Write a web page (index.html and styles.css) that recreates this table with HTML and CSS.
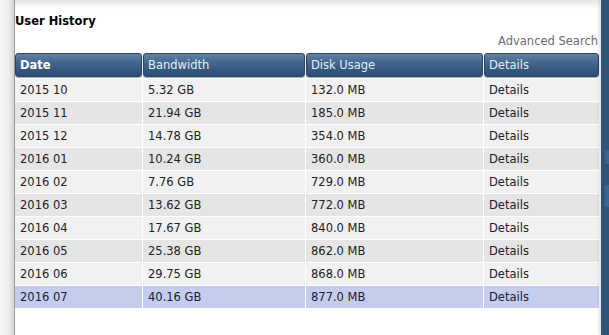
FILE: index.html
```html
<!DOCTYPE html>
<html>
<head>
<meta charset="utf-8">
<link rel="stylesheet" href="styles.css">
</head>
<body>
<div class="page">
  <div class="gutter"></div>
  <div class="panel">
    <div class="topshade"></div>
    <h2 class="title">User History</h2>
    <div class="search-row"><a class="adv" href="#">Advanced Search</a></div>
    <table class="history">
      <colgroup>
        <col class="c1"><col class="c2"><col class="c3"><col class="c4">
      </colgroup>
      <thead>
        <tr><th class="sorted">Date</th><th>Bandwidth</th><th>Disk Usage</th><th>Details</th></tr>
      </thead>
      <tbody>
        <tr class="odd"><td>2015 10</td><td>5.32 GB</td><td>132.0 MB</td><td>Details</td></tr>
        <tr class="even"><td>2015 11</td><td>21.94 GB</td><td>185.0 MB</td><td>Details</td></tr>
        <tr class="odd"><td>2015 12</td><td>14.78 GB</td><td>354.0 MB</td><td>Details</td></tr>
        <tr class="even"><td>2016 01</td><td>10.24 GB</td><td>360.0 MB</td><td>Details</td></tr>
        <tr class="odd"><td>2016 02</td><td>7.76 GB</td><td>729.0 MB</td><td>Details</td></tr>
        <tr class="even"><td>2016 03</td><td>13.62 GB</td><td>772.0 MB</td><td>Details</td></tr>
        <tr class="odd"><td>2016 04</td><td>17.67 GB</td><td>840.0 MB</td><td>Details</td></tr>
        <tr class="even"><td>2016 05</td><td>25.38 GB</td><td>862.0 MB</td><td>Details</td></tr>
        <tr class="odd"><td>2016 06</td><td>29.75 GB</td><td>868.0 MB</td><td>Details</td></tr>
        <tr class="current"><td>2016 07</td><td>40.16 GB</td><td>877.0 MB</td><td>Details</td></tr>
      </tbody>
    </table>
  </div>
  <div class="side">
    <div class="side-patch p1"></div>
    <div class="side-patch p2"></div>
  </div>
</div>
</body>
</html>
```
FILE: styles.css
```css
html, body {
  margin: 0;
  padding: 0;
  background: #ffffff;
}
body {
  font-family: "DejaVu Sans", Verdana, sans-serif;
  font-size: 11.5px;
  color: #222;
  width: 609px;
  height: 335px;
  overflow: hidden;
}
.page {
  display: flex;
  height: 335px;
}
.gutter {
  width: 14px;
  flex: none;
  background: linear-gradient(to right, #f7f7f7 0%, #eeeeee 60%, #d4d4d4 100%);
  border-right: 1px solid #9a9a9a;
}
.panel {
  flex: none;
  width: 585px;
  position: relative;
  background: #fff;
  padding-right: 1px;
}
.topshade {
  height: 9px;
  background: linear-gradient(to bottom, #e4e4e4 0%, #f4f4f4 60%, #ffffff 100%);
}
.title {
  margin: 6px 0 0 0;
  font-size: 11.5px;
  font-weight: bold;
  color: #000;
  line-height: 13px;
}
.search-row {
  text-align: right;
  margin-top: 7px;
  height: 13px;
  line-height: 13px;
  padding-right: 2px;
}
.adv {
  color: #6b6b6b;
  text-decoration: none;
  font-size: 11.5px;
}
.history {
  margin-top: 4px;
  border-collapse: separate;
  border-spacing: 1px 1px;
  width: 586px;
  margin-left: -1px;
  table-layout: fixed;
}
.c1 { width: 127px; }
.c2 { width: 162px; }
.c3 { width: 177px; }
.c4 { width: 115px; }
.history th {
  height: 22px;
  padding: 0 0 0 4px;
  text-align: left;
  font-weight: normal;
  color: #e6edf5;
  background: linear-gradient(to bottom, #5f82a8 0%, #45698f 35%, #33577c 75%, #2b4d70 100%);
  border: 1px solid #2a4766;
  border-radius: 3px;
  box-shadow: 0 1px 1px rgba(0,0,0,0.35);
}
.history th.sorted {
  font-weight: bold;
  color: #ffffff;
}
.history td {
  height: 22px;
  padding: 0 0 0 5px;
  color: #222;
}
.history tr.odd td { background: #f1f1f1; }
.history tr.even td { background: #e5e5e5; }
.history tr.current td { background: #c5cdef; color: #1c2030; }
.history tbody tr:first-child td { border-top: 1px solid #fff; }
.side {
  flex: 1;
  background: #2e5478;
  box-shadow: -2px 0 3px rgba(0,0,0,0.12);
  position: relative;
}
.side-patch {
  position: absolute;
  left: 4px;
  width: 5px;
  background: #3a6592;
}
.p1 { top: 150px; height: 14px; }
.p2 { top: 185px; height: 22px; }
```
